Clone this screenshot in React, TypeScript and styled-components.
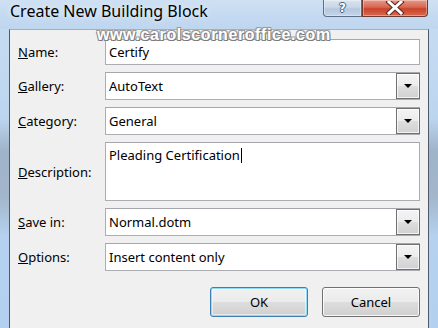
import React from 'react';
import styled, { createGlobalStyle } from 'styled-components';

const GlobalStyle = createGlobalStyle`
  html, body {
    margin: 0;
    padding: 0;
    background: #ffffff;
  }
  body {
    font-family: "Noto Sans", "DejaVu Sans", sans-serif;
  }
`;

const Window = styled.div`
  position: relative;
  width: 438px;
  height: 328px;
  overflow: hidden;
  display: flex;
  flex-direction: column;
  background: linear-gradient(
    180deg,
    #c9ddf2 0%,
    #bcd5ef 36%,
    #9fb3c9 46%,
    #a3b6cb 60%,
    #b5d1ef 72%,
    #b3d0f0 100%
  );
  font-family: "Noto Sans", "DejaVu Sans", sans-serif;
  color: #000;
`;

const TitleBar = styled.div`
  height: 29px;
  flex: none;
  display: flex;
  align-items: flex-start;
  justify-content: space-between;
  padding-left: 10px;
  background: linear-gradient(180deg, #cfe0f3 0%, #c3d9f1 60%, #bfd6ef 100%);
`;

const Title = styled.div`
  font-size: 16px;
  line-height: 22px;
  color: #000;
  text-shadow: 0 0 6px rgba(255, 255, 255, 0.9);
`;

const Controls = styled.div`
  display: flex;
  margin-right: 10px;
`;

const CaptionButton = styled.div<{ $kind: 'help' | 'close' }>`
  width: ${(p) => (p.$kind === 'close' ? 66 : 39)}px;
  height: 17px;
  box-sizing: border-box;
  display: flex;
  align-items: center;
  justify-content: center;
  border: 1px solid ${(p) => (p.$kind === 'close' ? '#6b3a34' : '#5d6f87')};
  border-top: none;
  border-radius: ${(p) => (p.$kind === 'close' ? '0 0 4px 0' : '0 0 0 4px')};
  background: ${(p) =>
    p.$kind === 'close'
      ? 'linear-gradient(180deg, #e49a88 0%, #d9664f 45%, #c9432b 55%, #d86a4e 100%)'
      : 'linear-gradient(180deg, #d9e4f1 0%, #c8d6e8 45%, #b7c8de 55%, #c2d4ea 100%)'};
  box-shadow: inset 0 0 0 1px rgba(255, 255, 255, 0.35);
`;

const HelpGlyph = styled.span`
  font-family: "DejaVu Sans", sans-serif;
  font-weight: bold;
  font-size: 12px;
  line-height: 13px;
  color: #fff;
  text-shadow: 1px 0 0 #4a5b73, -1px 0 0 #4a5b73, 0 1px 0 #4a5b73, 0 -1px 0 #4a5b73;
`;

const Watermark = styled.div`
  position: absolute;
  left: 97px;
  top: 26px;
  font-family: "Liberation Sans", Arial, sans-serif;
  font-weight: bold;
  font-size: 16px;
  letter-spacing: 0.6px;
  color: #fff;
  text-shadow: 1px 1px 0 #7a7a7a, -1px -1px 0 #9a9a9a, 1px -1px 0 #9a9a9a,
    -1px 1px 0 #8a8a8a, 0 1px 0 #7a7a7a;
  pointer-events: none;
`;

const Body = styled.div`
  flex: 1;
  margin-left: 9px;
  margin-right: 9px;
  border-left: 1px solid #4d5a6c;
  border-right: 1px solid #4d5a6c;
  border-top: 1px solid #9fb0c4;
  background: #f0f0f0;
  padding: 9px 8px 0 8px;
  display: flex;
  flex-direction: column;
`;

const FormGrid = styled.div`
  display: grid;
  grid-template-columns: 87px 1fr;
  grid-template-rows: 26px 28px 28px 59px 28px 28px;
  row-gap: 7px;
`;

const Label = styled.div`
  font-size: 13px;
  display: flex;
  align-items: center;
  span {
    text-decoration: underline;
  }
`;

const Field = styled.div<{ $multi?: boolean }>`
  box-sizing: border-box;
  height: 100%;
  background: #fff;
  border: 1px solid #abadb3;
  border-top-color: #a5a7ad;
  display: flex;
  align-items: ${(p) => (p.$multi ? 'flex-start' : 'center')};
  font-size: 13px;
  padding-left: 3px;
  padding-top: ${(p) => (p.$multi ? '3px' : '0')};
`;

const FieldText = styled.div`
  flex: 1;
  white-space: nowrap;
  overflow: hidden;
`;

const Caret = styled.span`
  display: inline-block;
  width: 1px;
  height: 15px;
  background: #000;
  vertical-align: -3px;
  margin-left: 1px;
`;

const DropButton = styled.div`
  box-sizing: border-box;
  width: 24px;
  height: 100%;
  flex: none;
  margin-right: -1px;
  border: 1px solid #707070;
  background: linear-gradient(180deg, #f4f4f4 0%, #ececec 48%, #dedede 52%, #d1d1d1 100%);
  box-shadow: inset 0 0 0 1px rgba(255, 255, 255, 0.7);
  display: flex;
  align-items: center;
  justify-content: center;
`;

const Arrow = styled.div`
  width: 0;
  height: 0;
  border-left: 4px solid transparent;
  border-right: 4px solid transparent;
  border-top: 4px solid #000;
`;

const ButtonRow = styled.div`
  display: flex;
  justify-content: flex-end;
  gap: 14px;
  margin-top: 16px;
`;

const PushButton = styled.div<{ $default?: boolean }>`
  box-sizing: border-box;
  width: 98px;
  height: 30px;
  border-radius: 3px;
  border: 1px solid ${(p) => (p.$default ? '#3c7fb1' : '#707070')};
  background: linear-gradient(180deg, #f2f2f2 0%, #ebebeb 48%, #dddddd 52%, #cfcfcf 100%);
  box-shadow: ${(p) =>
    p.$default
      ? 'inset 0 0 0 1px #8fdcf5, inset 0 0 0 2px rgba(255,255,255,0.5)'
      : 'inset 0 0 0 1px rgba(255,255,255,0.8)'};
  display: flex;
  align-items: center;
  justify-content: center;
  font-size: 13px;
`;

function Select({ value }: { value: string }) {
  return (
    <Field>
      <FieldText>{value}</FieldText>
      <DropButton>
        <Arrow />
      </DropButton>
    </Field>
  );
}

function CloseGlyph() {
  return (
    <svg width="22" height="14" viewBox="0 0 22 14">
      <path d="M5 1 L17 12 M17 1 L5 12" stroke="#5a2a22" strokeWidth="5" strokeLinecap="square" />
      <path d="M5 1 L17 12 M17 1 L5 12" stroke="#ffffff" strokeWidth="3" strokeLinecap="square" />
    </svg>
  );
}

export default function App() {
  return (
    <>
      <GlobalStyle />
      <Window>
        <TitleBar>
          <Title>Create New Building Block</Title>
          <Controls>
            <CaptionButton $kind="help">
              <HelpGlyph>?</HelpGlyph>
            </CaptionButton>
            <CaptionButton $kind="close">
              <CloseGlyph />
            </CaptionButton>
          </Controls>
        </TitleBar>
        <Body>
          <FormGrid>
            <Label>
              <span>N</span>ame:
            </Label>
            <Field>
              <FieldText>Certify</FieldText>
            </Field>

            <Label>
              <span>G</span>allery:
            </Label>
            <Select value="AutoText" />

            <Label>
              <span>C</span>ategory:
            </Label>
            <Select value="General" />

            <Label>
              <span>D</span>escription:
            </Label>
            <Field $multi>
              <FieldText>
                Pleading Certification
                <Caret />
              </FieldText>
            </Field>

            <Label>
              <span>S</span>ave in:
            </Label>
            <Select value="Normal.dotm" />

            <Label>
              <span>O</span>ptions:
            </Label>
            <Select value="Insert content only" />
          </FormGrid>
          <ButtonRow>
            <PushButton $default>OK</PushButton>
            <PushButton>Cancel</PushButton>
          </ButtonRow>
        </Body>
        <Watermark>www.carolscorneroffice.com</Watermark>
      </Window>
    </>
  );
}
